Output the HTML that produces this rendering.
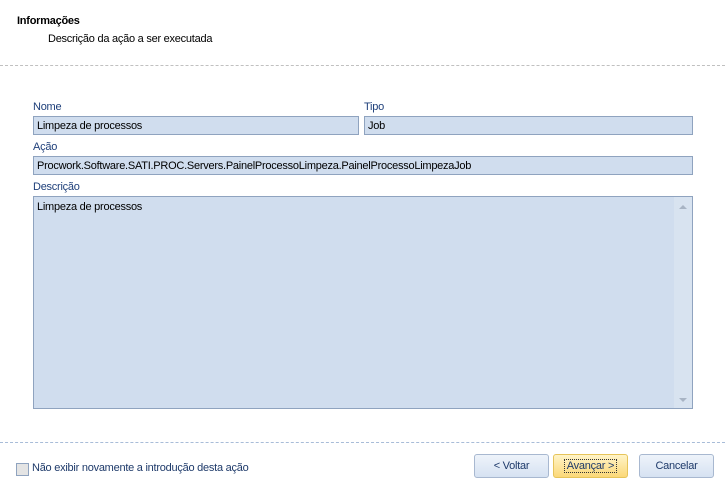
<!DOCTYPE html>
<html><head><meta charset="utf-8"><style>
body{margin:0;width:725px;height:488px;background:#fff;font-family:"Liberation Sans",sans-serif;font-size:11px;letter-spacing:-0.25px;color:#000;position:relative;overflow:hidden}
.a{position:absolute}
.lbl{color:#1e3f7a}
.f{position:absolute;background:#d0ddee;border:1px solid #8fa3bf;box-sizing:border-box;padding:3px 0 0 3px;height:19px}
.btn{position:absolute;top:454px;width:75px;height:24px;box-sizing:border-box;border:1px solid #a8b8d0;border-radius:3px;background:linear-gradient(#eef3fa,#d6e2f2);text-align:center;line-height:23px;color:#1e3a6a}
</style></head><body>
<div class="a" style="left:17px;top:15px;font-weight:bold">Informações</div>
<div class="a" style="left:48px;top:33px">Descrição da ação a ser executada</div>
<div class="a" style="left:0;top:65px;width:725px;border-top:1px dashed #c0c0c0"></div>
<div class="a lbl" style="left:33px;top:101px">Nome</div>
<div class="f" style="left:33px;top:116px;width:326px">Limpeza de processos</div>
<div class="a lbl" style="left:364px;top:101px">Tipo</div>
<div class="f" style="left:364px;top:116px;width:329px">Job</div>
<div class="a lbl" style="left:33px;top:141px">Ação</div>
<div class="f" style="left:33px;top:156px;width:660px">Procwork.Software.SATI.PROC.Servers.PainelProcessoLimpeza.PainelProcessoLimpezaJob</div>
<div class="a lbl" style="left:33px;top:181px">Descrição</div>
<div class="f" style="left:33px;top:196px;width:660px;height:213px;padding-top:4px">Limpeza de processos
<div class="a" style="right:0;top:0;width:18px;height:211px;background:#d8e3f0"></div>
<div class="a" style="right:5px;top:8px;border:4px solid transparent;border-bottom:4px solid #a8b4c4;border-top:0"></div>
<div class="a" style="right:5px;bottom:6px;border:4px solid transparent;border-top:4px solid #a8b4c4;border-bottom:0"></div>
</div>
<div class="a" style="left:0;top:442px;width:725px;border-top:1px dashed #a8bcd8"></div>
<div class="a" style="left:16px;top:463px;width:11px;height:11px;border:1px solid #8fa3bf;background:#e4e4e4"></div>
<div class="a" style="left:32px;top:462px;color:#1e3a6a">Não exibir novamente a introdução desta ação</div>
<div class="btn" style="left:474px">&lt; Voltar</div>
<div class="btn" style="left:553px;border-color:#e6c45a;background:linear-gradient(#fff4c8,#fbd878)"><span style="outline:1px dotted #333;padding:0 2px">Avançar &gt;</span></div>
<div class="btn" style="left:639px">Cancelar</div>
</body></html>
